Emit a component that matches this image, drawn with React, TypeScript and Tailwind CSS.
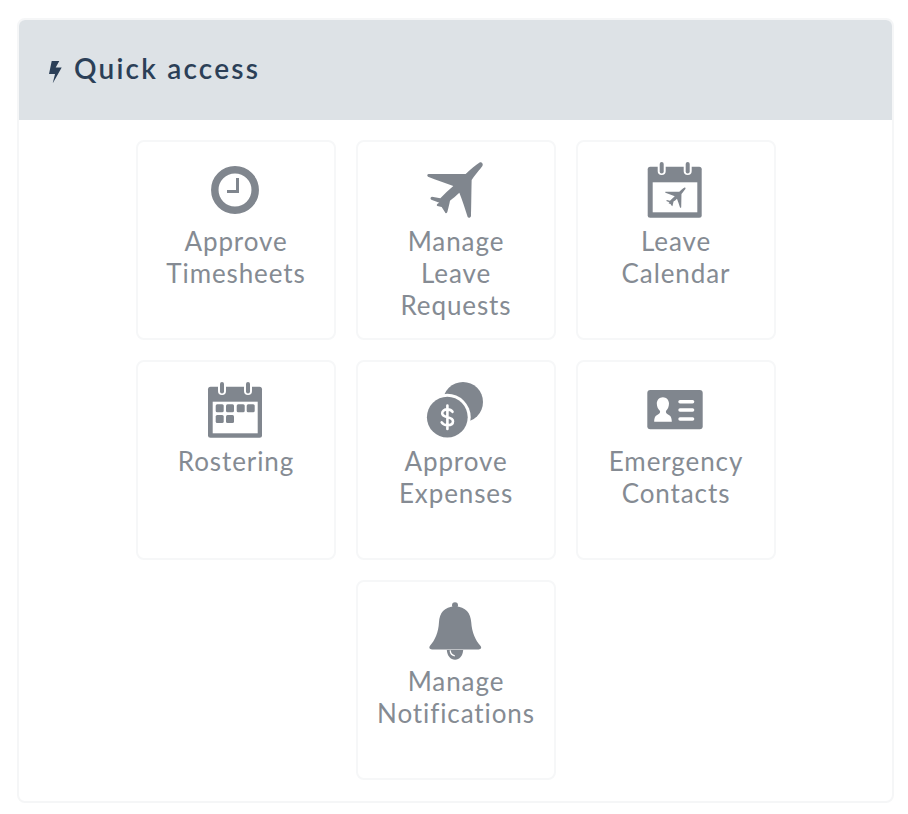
import React from "react";

const GREY = "#80868e";

const planePath =
  "M240 37C244 35 250 40 248 46C246 52 232 66 215 90C214 130 214 170 213 198C212 204 205 205 203 201C195 175 187 150 178 128C168 138 158 146 150 152C148 162 145 175 142 186C140 191 136 191 135 187L125 171L112 168C108 165 111 161 118 158L94 149C90 146 91 141 96 140L121 145C133 132 146 120 160 108C135 98 110 90 84 80C80 77 82 72 86 72C120 72 160 72 197 72C212 58 228 44 240 37Z";

const ClockIcon = () => (
  <svg viewBox="206 160 60 60" className="w-[60px] h-[60px]">
    <circle cx="235" cy="190" r="20.2" fill="none" stroke={GREY} strokeWidth="7.5" />
    <path d="M236 178h3v15h-12v-3h9z" fill={GREY} />
  </svg>
);

const PlaneIcon = () => (
  <svg viewBox="426 160 60 60" className="w-[60px] h-[60px]">
    <g transform="translate(400 150) scale(0.3333)">
      <path d={planePath} fill={GREY} />
    </g>
  </svg>
);

const CalendarBase = ({ x, y }: { x: number; y: number }) => (
  <>
    <rect x={x} y={y + 6.7} width="54" height="51" rx="2.5" fill={GREY} />
    <rect x={x + 10} y={y + 1} width="8" height="14" rx="4" fill="#fff" />
    <rect x={x + 36} y={y + 1} width="8" height="14" rx="4" fill="#fff" />
    <rect x={x + 12} y={y + 2} width="4" height="11.5" rx="2" fill={GREY} />
    <rect x={x + 38} y={y + 2} width="4" height="11.5" rx="2" fill={GREY} />
  </>
);

const LeaveCalendarIcon = () => (
  <svg viewBox="646 160 60 60" className="w-[60px] h-[60px]">
    <CalendarBase x={647.7} y={160} />
    <rect x="652.7" y="182.3" width="44.6" height="30" fill="#fff" />
    <g transform="translate(665 187.3) scale(0.122) translate(-80 -35)">
      <path d={planePath} fill={GREY} />
    </g>
  </svg>
);

const RosterIcon = () => {
  const cells = [
    [215.7, 404.3],
    [226, 404.3],
    [236.7, 404.3],
    [246.7, 404.3],
    [215.7, 415],
    [226, 415],
  ];
  return (
    <svg viewBox="206 380 60 60" className="w-[60px] h-[60px]">
      <CalendarBase x={208} y={380} />
      <rect x="212.7" y="401.7" width="45" height="31.6" fill="#fff" />
      {cells.map(([x, y]) => (
        <rect key={`${x}-${y}`} x={x} y={y} width="8" height="8" rx="1.5" fill={GREY} />
      ))}
    </svg>
  );
};

const CoinsIcon = () => (
  <svg viewBox="426 380 60 60" className="w-[60px] h-[60px]">
    <circle cx="463" cy="402" r="20" fill={GREY} />
    <circle cx="447.3" cy="417.2" r="23.4" fill="#fff" />
    <circle cx="447.3" cy="417.2" r="20.4" fill={GREY} />
    <path
      d="M452.5 411.8C451.5 410.2 449.6 409.4 447.4 409.4C444.3 409.4 442.2 411 442.2 413.3C442.2 418.6 453 416 453 421.3C453 423.7 450.7 425.2 447.5 425.2C445 425.2 442.8 424.2 441.7 422.4M447.4 405.6V429"
      fill="none"
      stroke="#fff"
      strokeWidth="2.6"
      strokeLinecap="round"
    />
  </svg>
);

const CardIcon = () => (
  <svg viewBox="646 380 60 60" className="w-[60px] h-[60px]">
    <rect x="647.3" y="390" width="55.4" height="39.3" rx="3" fill={GREY} />
    <path
      d="M662.9 397.2C666.4 397.2 669 400 669 403.6C669 406.8 667.6 409.6 666 411C665.6 412.6 666.4 413.6 668 414.4C670.4 415.6 671.8 417 671.8 421.8H654.2C654.2 417 655.6 415.6 658 414.4C659.6 413.6 660.4 412.6 660 411C658.3 409.6 656.8 406.8 656.8 403.6C656.8 400 659.4 397.2 662.9 397.2Z"
      fill="#fff"
    />
    <rect x="678.3" y="400" width="16" height="3.4" rx="1.7" fill="#fff" />
    <rect x="678.3" y="408.3" width="16" height="3.4" rx="1.7" fill="#fff" />
    <rect x="678.3" y="417.3" width="16" height="3.4" rx="1.7" fill="#fff" />
  </svg>
);

const BellIcon = () => (
  <svg viewBox="426 600 60 60" className="w-[60px] h-[60px]">
    <circle cx="455" cy="605.2" r="3" fill={GREY} />
    <path
      d="M455 606.5C444 606.5 439.5 613.5 439 622C438.4 633 435 640 430 645.8C428.6 647.8 429.6 649.4 432 649.4H478.6C481 649.4 482 647.8 480.4 645.8C475.4 640 472 633 471.2 622C470.6 613.5 466 606.5 455 606.5Z"
      fill={GREY}
    />
    <path d="M446.8 650H463.2C462.8 655.8 459.4 659.8 455 659.8C450.6 659.8 447.2 655.8 446.8 650Z" fill={GREY} />
    <path d="M450.2 650.4C450.4 653.4 452 655.4 454.8 655.8" fill="none" stroke="#fff" strokeWidth="1.3" />
  </svg>
);

const tiles = [
  { label: ["Approve", "Timesheets"], icon: <ClockIcon /> },
  { label: ["Manage", "Leave", "Requests"], icon: <PlaneIcon /> },
  { label: ["Leave", "Calendar"], icon: <LeaveCalendarIcon /> },
  { label: ["Rostering"], icon: <RosterIcon /> },
  { label: ["Approve", "Expenses"], icon: <CoinsIcon /> },
  { label: ["Emergency", "Contacts"], icon: <CardIcon /> },
  { label: ["Manage", "Notifications"], icon: <BellIcon /> },
];

export default function App() {
  return (
    <div className="w-[908px] h-[814px] bg-white pt-[18px] pl-[17px] font-['Lato',sans-serif]">
      <div className="w-[877px] h-[785px] rounded-lg border-2 border-[#f5f6f7] overflow-hidden">
        {/* Header */}
        <div className="h-[100px] bg-[#dde2e6] flex items-center pl-[30px] gap-[12px]">
          <svg viewBox="49 61 13 22" className="w-[13px] h-[22px] mt-[4px]">
            <path d="M51.7 61H59.3L55.7 67.4H61.7L52.7 83.4L55 74H49Z" fill="#2b3f57" />
          </svg>
          <h2 className="text-[28px] font-semibold tracking-[2.2px] text-[#2b3f57] mb-[4px]">Quick access</h2>
        </div>

        {/* Tiles */}
        <div className="pt-5 pl-[1px]">
          <div className="w-[640px] mx-auto flex flex-wrap justify-center gap-5">
            {tiles.map((tile) => (
              <div
                key={tile.label.join(" ")}
                className="w-[200px] h-[200px] rounded-lg border-2 border-[#f6f7f8] flex flex-col items-center pt-[18px]"
              >
                {tile.icon}
                <div className="mt-[5px] text-[26px] leading-8 tracking-[0.9px] text-[#858b93] text-center">
                  {tile.label.map((line) => (
                    <div key={line}>{line}</div>
                  ))}
                </div>
              </div>
            ))}
          </div>
        </div>
      </div>
    </div>
  );
}
